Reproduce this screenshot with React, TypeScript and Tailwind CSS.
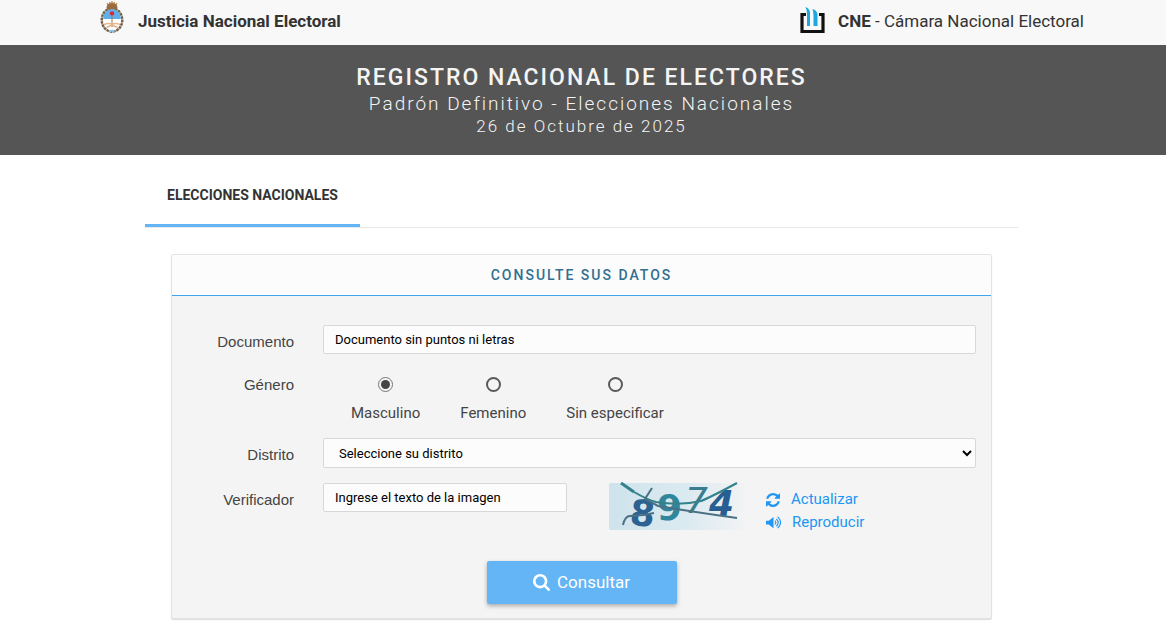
import { useState } from "react"
import type { ReactNode } from "react"

const genders = [
  { id: "M", label: "Masculino", spacing: "ml-7" },
  { id: "F", label: "Femenino", spacing: "ml-10" },
  { id: "X", label: "Sin especificar", spacing: "ml-10" },
]

const fieldClass =
  "rounded-[2px] border border-[#d8d8d8] bg-[#fcfcfc] text-[13px] text-black placeholder:text-black placeholder:opacity-100 outline-none focus:border-[#64b5f6]"

const labelClass = "mr-[29px] w-[122px] shrink-0 text-right font-['Liberation_Sans',sans-serif] text-[15px] leading-5"

function ShieldLogo() {
  return (
    <svg className="h-8 w-6" viewBox="0 0 24 32" aria-hidden="true">
      <ellipse cx="12" cy="19" rx="10.2" ry="11.6" fill="none" stroke="#b9ab98" strokeWidth="2.4" />
      <ellipse cx="12" cy="19" rx="10.2" ry="11.6" fill="none" stroke="#6a5d4c" strokeWidth="2.4" strokeDasharray="2 1.4" />
      <ellipse cx="12" cy="19" rx="9" ry="10.4" fill="#fff" />
      <path d="M3 18a9 10 0 0 1 18 0Z" fill="#5fb0ea" />
      <path d="M6.500 7a5.500 5.500 0 0 1 11 0l-1 2q-4.500-2-9 0Z" fill="#9b6b40" />
      <path d="M8 4 7 2M10 3l-.5-2M12 3V0M14 3l.5-2M16 4l1-2" stroke="#b98b55" strokeWidth="1.200" />
      <path d="M12 13v13" stroke="#a5764b" strokeWidth="1" />
      <path d="M12 10.200c1.500 0 2.200 1 2.200 2.200s-.8 2-2.200 2-2.200-.8-2.200-2 .7-2.200 2.200-2.200Z" fill="#d8283a" />
      <path d="M4 23.500q5-2 8 0 3-2 8 0M6.500 26.500l5.500-2.500 5.500 2.500" fill="none" stroke="#e2b58a" strokeWidth="1.600" />
      <path d="m9 29.500 3-1 3 1-1 2-2-1-2 1Z" fill="#8cc6ea" />
    </svg>
  )
}

function CneLogo() {
  return (
    <svg className="h-7 w-[25px]" viewBox="0 0 25 28" aria-hidden="true">
      <path d="M6 7.500H2v17h21v-17h-4" fill="none" stroke="#111" strokeWidth="3.200" />
      <path d="M5.500 0Q9 1 10 5v14H7V7Q7 3 5.500 0ZM12.500 2q4 1 5 5v12h-4V9q0-4-1-7Z" fill="#1ba7df" />
    </svg>
  )
}

function RefreshIcon() {
  return (
    <svg className="size-[14px]" viewBox="0 0 1536 1536" fill="currentColor" aria-hidden="true">
      <path d="M1511 928q0 5-1 7-64 268-268 434.500T764 1536q-146 0-282.500-55T238 1324l-129 129q-19 19-45 19t-45-19-19-45V960q0-26 19-45t45-19h448q26 0 45 19t19 45-19 45l-137 137q71 66 161 102t187 36q134 0 250-65t186-179q11-17 53-117 8-23 30-23h192q13 0 22.500 9.500t9.500 22.500zm25-800v448q0 26-19 45t-45 19h-448q-26 0-45-19t-19-45 19-45l138-138Q969 256 768 256q-134 0-250 65T332 500q-11 17-53 117-8 23-30 23H50q-13 0-22.500-9.500T18 608v-7q65-268 270-434.500T768 0q146 0 284 55.500T1297 212l130-129q19-19 45-19t45 19 19 45z" />
    </svg>
  )
}

function VolumeIcon() {
  return (
    <svg className="h-[14px] w-[15px]" viewBox="0 0 16 14" aria-hidden="true">
      <path d="M0 4.500h3l5-4v12l-5-4H0Z" fill="currentColor" />
      <path d="M9.500 4.500q2 2 0 4M11 2.500q4 4 0 8M12.500.5q6 6 0 12" fill="none" stroke="currentColor" strokeWidth="1.200" />
    </svg>
  )
}

function SearchIcon() {
  return (
    <svg className="size-[17px]" viewBox="0 0 1664 1664" fill="currentColor" aria-hidden="true">
      <path d="M1152 704q0-185-131.500-316.500T704 256 387.500 387.500 256 704t131.500 316.500T704 1152t316.500-131.500T1152 704zm512 832q0 52-38 90t-90 38q-54 0-90-38l-343-342q-179 124-399 124-143 0-273.500-55.500t-225-150-150-225T0 704t55.500-273.500 150-225 225-150T704 0t273.500 55.500 225 150 150 225T1408 704q0 220-124 399l343 343q37 37 37 90z" />
    </svg>
  )
}

function Captcha() {
  return (
    <svg className="h-[47px] w-[140px] shrink-0 overflow-visible" viewBox="0 0 140 47" role="img" aria-label="Imagen del verificador">
      <defs>
        <linearGradient id="captcha-bg">
          <stop offset="0" stopColor="#cfe3ec" />
          <stop offset=".55" stopColor="#dbeaf1" />
          <stop offset="1" stopColor="#f4f4f4" />
        </linearGradient>
      </defs>
      <rect width="140" height="47" rx="2" fill="url(#captcha-bg)" />
      <g fontFamily="DejaVu Sans" fontWeight="bold" fontSize="36">
        <text x="21" y="43" fill="#2b6291" transform="rotate(6 34 30)">8</text>
        <text x="48" y="37" fill="#30869a">9</text>
        <text x="76" y="30" fontStyle="italic" fontWeight="normal" fill="#397d91">7</text>
        <text x="100" y="33" fontStyle="italic" fill="#275f93">4</text>
      </g>
      <g fill="none" stroke="#4a7183" strokeWidth="1.500">
        <path d="M12 0 25 9" stroke="#34818b" strokeWidth="3" />
        <path d="M25 9q14 8 22 10 24 4 45-1 10-4 36-18" stroke="#34818b" strokeWidth="2" />
        <path d="m43 5-7 11 13 7q36 6 79 12" strokeWidth="2" />
        <path d="M14 42q2-9 7-9 12 0 24-3" strokeWidth="2" />
      </g>
    </svg>
  )
}

function FormRow({ label, htmlFor, children }: { label: string; htmlFor: string; children: ReactNode }) {
  return (
    <div className="flex grow">
      <label htmlFor={htmlFor} className={`pt-[7px] ${labelClass}`}>
        {label}
      </label>
      {children}
    </div>
  )
}

export default function App() {
  const [gender, setGender] = useState("M")

  return (
    <div className="min-h-screen bg-white font-['Roboto',sans-serif] text-[#444]">
      <header className="bg-[#f8f8f8] pl-[18px]">
        <div className="mx-auto flex h-[45px] max-w-[984px] items-start justify-between pt-px text-[17px] leading-10 text-[#333]">
          <div className="flex items-start gap-[14px]">
            <ShieldLogo />
            <span className="font-bold">Justicia Nacional Electoral</span>
          </div>
          <div className="flex items-center gap-[13px]">
            <CneLogo />
            <span>
              <strong>CNE</strong> - Cámara Nacional Electoral
            </span>
          </div>
        </div>
      </header>

      <div className="h-[110px] bg-[#555] pt-[19px] pr-[3px] text-center text-[#f4f4f4]">
        <h1 className="text-[23px] font-medium leading-7 tracking-[2px]">REGISTRO NACIONAL DE ELECTORES</h1>
        <p className="text-[19px] font-light leading-6 tracking-[2px]">Padrón Definitivo - Elecciones Nacionales</p>
        <p className="text-[17px] font-light leading-5 tracking-[2px]">26 de Octubre de 2025</p>
      </div>

      <div className="pr-[3px]">
        <main className="mx-auto max-w-[873px]">
          <nav className="flex h-[73px] border-b border-[#e8e8e8]">
            <a href="#nacionales" className="border-b-[3px] border-[#64b5f6] px-[22px] pt-[30px] text-sm font-bold leading-5 text-[#333]">
              ELECCIONES NACIONALES
            </a>
          </nav>

          <section className="mx-[26px] mt-[26px] rounded-[2px] border border-[#e3e3e3] bg-[#f4f4f4] shadow-[0_1px_1px_#ddd]">
            <h2 className="border-b border-[#42a5ed] bg-[#fcfcfc] py-[10px] text-center text-sm font-medium leading-5 tracking-[2px] text-[#31708f]">
              CONSULTE SUS DATOS
            </h2>

            <form className="pt-[29px] pr-[15px] pb-[14px]" onSubmit={(e) => e.preventDefault()}>
              <FormRow label="Documento" htmlFor="documento">
                <input id="documento" className={`h-[29px] min-w-0 flex-1 px-[11px] ${fieldClass}`} placeholder="Documento sin puntos ni letras" />
              </FormRow>

              <fieldset className="mt-[21px] flex">
                <legend className={`float-left ${labelClass}`}>Género</legend>
                {genders.map((g) => (
                  <label key={g.id} className={`flex flex-col items-center gap-[11px] text-[15px] leading-5 ${g.spacing}`}>
                    <input
                      type="radio"
                      name="genero"
                      value={g.id}
                      checked={gender === g.id}
                      onChange={() => setGender(g.id)}
                      className="mt-[2px] size-[15px] appearance-none rounded-full border-2 border-[#5a5a5a] bg-clip-content p-[2px] checked:border checked:border-[#777] checked:bg-[#444]"
                    />
                    {g.label}
                  </label>
                ))}
              </fieldset>

              <div className="mt-[15px] flex">
                <FormRow label="Distrito" htmlFor="distrito">
                  <select id="distrito" className={`h-[30px] min-w-0 flex-1 px-[11px] ${fieldClass}`}>
                    <option>Seleccione su distrito</option>
                  </select>
                </FormRow>
              </div>

              <div className="mt-[15px] flex items-start">
                <div>
                  <FormRow label="Verificador" htmlFor="verificador">
                    <input id="verificador" className={`h-[29px] w-[244px] px-[11px] ${fieldClass}`} placeholder="Ingrese el texto de la imagen" />
                  </FormRow>
                </div>
                <div className="ml-[42px] flex">
                  <Captcha />
                  <div className="ml-[17px] flex flex-col items-start pt-[5px] text-[15px] leading-[23px] text-[#2196f3]">
                    <button type="button" className="flex items-center gap-[11px]">
                      <RefreshIcon />
                      Actualizar
                    </button>
                    <button type="button" className="flex items-center gap-[11px]">
                      <VolumeIcon />
                      Reproducir
                    </button>
                  </div>
                </div>
              </div>

              <div className="mt-[27px] flex justify-center pl-[15px]">
                <button type="submit" className="flex h-[43px] w-[190px] items-center justify-center gap-[7px] rounded-[2px] bg-[#64b5f6] text-[17px] text-white shadow-[0_2px_4px_#aaa]">
                  <SearchIcon />
                  Consultar
                </button>
              </div>
            </form>
          </section>
        </main>
      </div>
    </div>
  )
}
